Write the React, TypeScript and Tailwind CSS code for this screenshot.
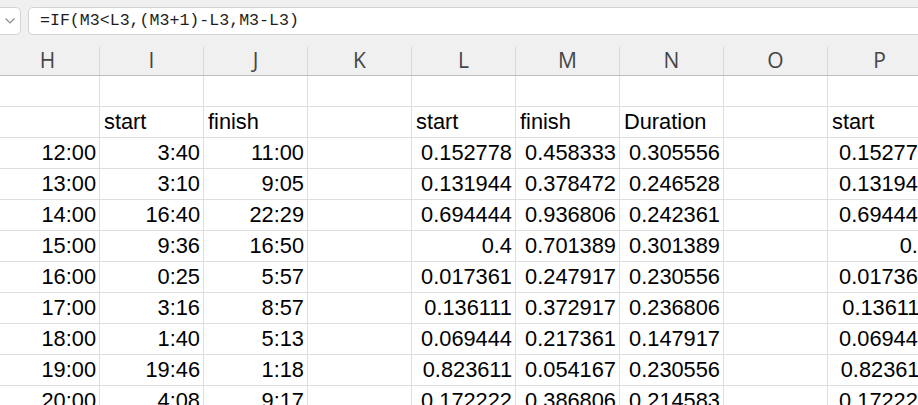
// @ts-nocheck
const cols = ["H", "I", "J", "K", "L", "M", "N", "O", "P"];

// one row per sheet row, columns H..P
const rows = [
  ["", "", "", "", "", "", "", "", ""],
  ["", "start", "finish", "", "start", "finish", "Duration", "", "start"],
  ["12:00", "3:40", "11:00", "", "0.152778", "0.458333", "0.305556", "", "0.152778"],
  ["13:00", "3:10", "9:05", "", "0.131944", "0.378472", "0.246528", "", "0.131944"],
  ["14:00", "16:40", "22:29", "", "0.694444", "0.936806", "0.242361", "", "0.694444"],
  ["15:00", "9:36", "16:50", "", "0.4", "0.701389", "0.301389", "", "0.4"],
  ["16:00", "0:25", "5:57", "", "0.017361", "0.247917", "0.230556", "", "0.017361"],
  ["17:00", "3:16", "8:57", "", "0.136111", "0.372917", "0.236806", "", "0.136111"],
  ["18:00", "1:40", "5:13", "", "0.069444", "0.217361", "0.147917", "", "0.069444"],
  ["19:00", "19:46", "1:18", "", "0.823611", "0.054167", "0.230556", "", "0.823611"],
  ["20:00", "4:08", "9:17", "", "0.172222", "0.386806", "0.214583", "", "0.172222"],
];

const isText = (v) => /^[A-Za-z]/.test(v);

function cellClass(v, j) {
  if (isText(v)) return "text-left pl-[4px]";
  // last column runs past the window edge
  return j === 8 ? "text-right pr-[1px]" : "text-right pr-[3px]";
}

export default function App() {
  return (
    <div className="w-[918px] h-[405px] overflow-hidden bg-white">
      {/* FORMULA BAR */}
      <div className="h-[47px] bg-[#f0f0f0] flex items-start pt-[7px] gap-[7px]">
        <div className="w-[40px] ml-[-19px] h-[28px] bg-white border border-[#d4d4d4] rounded-[5px] flex items-center justify-end pr-[4px] shrink-0">
          <svg width="12" height="8" viewBox="0 0 12 8">
            <polyline points="1.5,1.5 6,6 10.5,1.5" fill="none" stroke="#8a8a8a" strokeWidth="1.2" />
          </svg>
        </div>
        <div className="flex-1 mr-[-10px] h-[28px] bg-white border border-[#d4d4d4] rounded-[5px] flex items-center pl-[11px]">
          <span
            className="text-[16.6px] text-[#1e1e1e] leading-none"
            style={{ fontFamily: '"Liberation Mono", "DejaVu Sans Mono", monospace' }}
          >
            =IF(M3&lt;L3,(M3+1)-L3,M3-L3)
          </span>
        </div>
      </div>

      {/* COLUMN HEADERS */}
      <div className="flex ml-[-4px] h-[29px] bg-[#f0f0f0] border-b border-[#bdbdbd]">
        {cols.map((c) => (
          <div
            key={c}
            className="w-[104px] shrink-0 border-r border-[#d8d8d8] flex items-center justify-center text-[21px] text-[#454545] leading-none pb-[2px]"
            style={{ fontFamily: '"Open Sans", "Noto Sans", sans-serif' }}
          >
            {c}
          </div>
        ))}
      </div>

      {/* GRID */}
      <div
        className="ml-[-4px] text-[21.8px] text-black"
        style={{ fontFamily: '"Liberation Sans", Arial, sans-serif' }}
      >
        {rows.map((r, i) => (
          <div key={i} className="flex h-[31px] border-b border-[#dedede]">
            {r.map((v, j) => (
              <div
                key={j}
                className={`w-[104px] shrink-0 border-r border-[#dedede] leading-[30px] whitespace-nowrap ${cellClass(v, j)}`}
              >
                {v}
              </div>
            ))}
          </div>
        ))}
      </div>
    </div>
  );
}
